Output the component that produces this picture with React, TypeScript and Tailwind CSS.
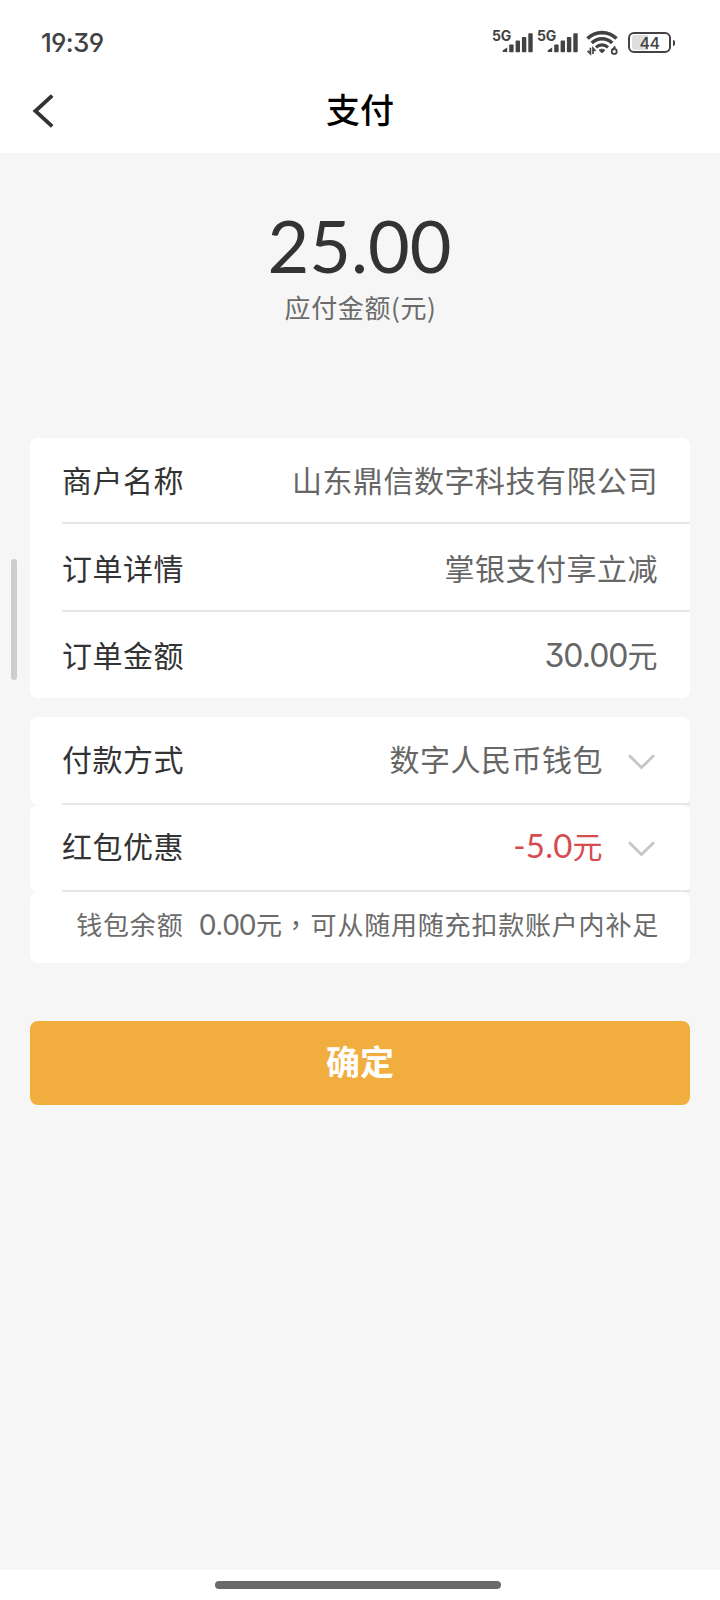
import { useState } from "react";

const orderRows = [
  { label: "商户名称", value: "山东鼎信数字科技有限公司", height: "h-[86px] pb-[4px]" },
  { label: "订单详情", value: "掌银支付享立减", height: "h-[88px] pb-[2px]" },
];

function Signal() {
  return (
    <div className="relative h-[24px] w-[42px]">
      <span className="absolute left-0 -top-px font-[Inter] text-[14px] leading-[14px] font-bold tracking-[-0.3px]">
        5G
      </span>
      <svg className="absolute left-[10px] top-[3px]" width="32" height="20" viewBox="0 0 32 20" fill="currentColor">
        <path d="M0.8 19 L0.8 17.2 L5.2 14.6 L5.2 19 Z" />
        <rect x="7.2" y="11.4" width="4.4" height="7.8" rx="0.8" />
        <rect x="13.6" y="7.6" width="4.4" height="11.6" rx="0.8" />
        <rect x="19.9" y="3.9" width="4.4" height="15.3" rx="0.8" />
        <rect x="26.3" y="0.2" width="4.4" height="19" rx="0.8" />
      </svg>
    </div>
  );
}

function Wifi() {
  return (
    <svg width="32" height="26" viewBox="0 0 32 26" fill="none" stroke="currentColor">
      <path d="M1.5 8.6 C9.5 0.6 22.5 0.6 30.5 8.6" strokeWidth="3.6" />
      <path d="M5.8 13 C11.5 7.4 20.5 7.4 26.2 13" strokeWidth="3.6" />
      <path d="M10 17.3 C13.5 14 18.5 14 22 17.3" strokeWidth="3.2" />
      <path d="M13 20.2 L16 23 L19 20.2 C17.4 18.8 14.6 18.8 13 20.2 Z" fill="currentColor" strokeWidth="0.8" />
      <path d="M4.4 17.8 V23.6 L1.6 20.8 M7 24 V18.2 L9.6 21" strokeWidth="1.7" />
      <path d="M29.2 16.4 L26.2 20.4" strokeWidth="1.8" />
      <circle cx="28.2" cy="21.4" r="2.5" strokeWidth="1.8" />
    </svg>
  );
}

function Battery() {
  return (
    <div className="flex items-center gap-[2px]">
      <div className="relative flex h-[21px] w-[43px] items-center justify-center overflow-hidden rounded-[6px] border-2 border-current">
        <div className="absolute left-[2px] top-[1px] h-[15px] w-[16px] rounded-l-[3px] bg-[#dedede]" />
        <span className="relative font-[Inter] text-[16px] leading-none font-medium tracking-[-0.5px]">44</span>
      </div>
      <div className="h-[6px] w-[2px] rounded-r-sm bg-current" />
    </div>
  );
}

function ChevronDown() {
  return (
    <svg className="relative top-[4px]" width="27" height="16" viewBox="0 0 27 16" fill="none" stroke="#c6c6c6" strokeWidth="2.8">
      <path d="M1 1.2 L13.5 13.6 L26 1.2" />
    </svg>
  );
}

function Divider() {
  return <div className="absolute bottom-0 left-8 right-0 h-[2px] bg-[#e7e7e7]" />;
}

export default function App() {
  const [method] = useState("数字人民币钱包");

  return (
    <main className="relative flex h-[1600px] w-[720px] flex-col overflow-hidden bg-[#f6f6f6] font-['Noto_Sans_CJK_SC',sans-serif] text-[#333]">

      {/* STATUS BAR */}
      <div className="flex h-[80px] items-start justify-between bg-white pl-[41px] pr-[45px] pt-[30px] text-[#424242]">
        <span className="font-[Inter] text-[26px] leading-[26px] font-medium tracking-[-0.7px] [font-feature-settings:'cv09','ss01']">
          19:39
        </span>
        <div className="flex items-start">
          <Signal />
          <div className="ml-[3px]">
            <Signal />
          </div>
          <div className="ml-[7px]">
            <Wifi />
          </div>
          <div className="ml-[10px] mt-[2px]">
            <Battery />
          </div>
        </div>
      </div>

      {/* TITLE */}
      <header className="grid h-[73px] grid-cols-3 bg-white pt-[8px]">
        <button className="ml-8 mt-[6px] self-start">
          <svg width="22" height="34" viewBox="0 0 22 34" fill="none" stroke="#333" strokeWidth="3.8">
            <path d="M20.2 1.6 L3.4 17 L20.2 32.4" />
          </svg>
        </button>
        <h1 className="text-center text-[34px] leading-[42px] font-medium text-black">支付</h1>
      </header>

      {/* AMOUNT */}
      <section className="flex h-[285px] flex-col items-center pt-[56px]">
        <div className="pr-[1px] font-[Lato] text-[72px] leading-[72px]">25.00</div>
        <div className="mt-[6px] pl-[1px] text-[26px] leading-[40px] tracking-[0.6px] text-[#6b6b6b]">应付金额(元)</div>
      </section>

      {/* ORDER */}
      <section className="mx-[30px] overflow-hidden rounded-lg bg-white text-[30px] leading-none tracking-[0.5px]">
        {orderRows.map((row) => (
          <div key={row.label} className={`relative flex items-center justify-between pl-8 pr-[32px] ${row.height}`}>
            <span>{row.label}</span>
            <span className="text-[#666]">{row.value}</span>
            <Divider />
          </div>
        ))}
        <div className="flex h-[86px] items-center justify-between pb-[3px] pl-8 pr-[32px]">
          <span>订单金额</span>
          <span className="pt-[4px] text-[#666]">
            <span className="font-[Inter] text-[32px] tracking-[-1px] [font-feature-settings:'cv09']">30.00</span>元
          </span>
        </div>
      </section>

      {/* PAYMENT */}
      <section className="mx-[30px] mt-[19px] text-[30px] leading-none tracking-[0.5px]">
        <div className="relative flex h-[88px] items-center rounded-lg bg-white pb-[6px] pl-8 pr-[35px]">
          <span className="flex-1">付款方式</span>
          <span className="mr-[25px] text-[#666]">{method}</span>
          <ChevronDown />
          <Divider />
        </div>
        <div className="relative flex h-[87px] items-center rounded-lg bg-white pb-[8px] pl-8 pr-[35px]">
          <span className="flex-1">红包优惠</span>
          <span className="mr-[25px] pt-[2px] text-[#d54c4f]">
            <span className="font-[Lato] text-[33px] tracking-[0.2px]">-5.0</span>元
          </span>
          <ChevronDown />
          <Divider />
        </div>
        <div className="flex h-[71px] items-center justify-end rounded-lg bg-white pb-[8px] pr-[31px] text-[26px] tracking-[0.8px] text-[#6b6b6b]">
          <span className="mr-[16px]">钱包余额</span>
          <span>
            <span className="font-[Lato] text-[28px] tracking-[0.3px]">0.00</span>元
            <span lang="zh-TW" className="mr-[1px] font-['Noto_Sans_CJK_TC']">{"\uff0c"}</span>可从随用随充扣款账户内补足
          </span>
        </div>
      </section>

      {/* CONFIRM */}
      <button className="mx-[30px] mt-[58px] h-[84px] rounded-lg bg-[#f2ad3f] pb-[4px] text-[34px] leading-none font-bold text-white">
        确定
      </button>

      {/* HOME INDICATOR */}
      <div className="mt-auto h-[30px] bg-white pl-[215px] pt-[11px]">
        <div className="h-[8px] w-[286px] rounded-full bg-[#6a6a6a]" />
      </div>

      {/* side handle */}
      <div className="absolute left-[11px] top-[559px] h-[121px] w-[6px] rounded-full bg-[#cdcdcd]" />
    </main>
  );
}
